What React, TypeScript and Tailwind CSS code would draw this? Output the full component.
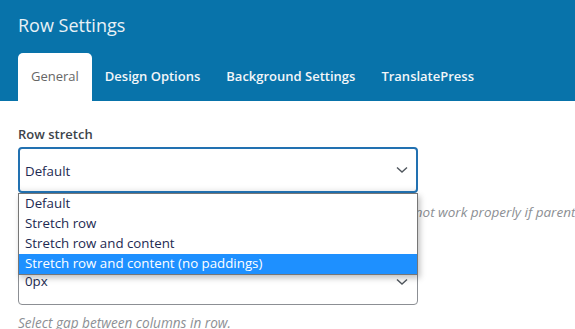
const tabs = ["General", "Design Options", "Background Settings", "TranslatePress"];

const options = [
  "Default",
  "Stretch row",
  "Stretch row and content",
  "Stretch row and content (no paddings)",
];

function Chevron() {
  return (
    <svg width="12" height="8" viewBox="0 0 12 8" className="shrink-0">
      <path d="M1 1.5 L6 6 L11 1.5" fill="none" stroke="#50575e" strokeWidth="1.4" />
    </svg>
  );
}

export default function App() {
  return (
    <div
      className="w-[575px] h-[329px] overflow-hidden bg-white"
      style={{ fontFamily: '"Open Sans", "Noto Sans", sans-serif' }}
    >
      <div className="bg-[#0873aa] px-[18px] pt-[11px]">
        <h1 className="text-[18px] leading-[28px] text-[#e8f1f6] font-normal">Row Settings</h1>
        <div className="flex mt-[14px]">
          {tabs.map((t, i) => (
            <div
              key={t}
              className={
                i === 0
                  ? "h-[48px] px-[13px] flex items-center rounded-t-[5px] bg-white text-[13px] text-[#666]"
                  : "h-[48px] px-[13px] flex items-center text-[13px] font-semibold text-[#f2f6f9]"
              }
            >
              {t}
            </div>
          ))}
        </div>
      </div>

      <div className="px-[18px] pt-[23px]">
        <div className="relative w-[400px]">
          <div className="text-[13px] leading-[20px] font-semibold text-[#3c434a]">Row stretch</div>
          <div className="mt-[3px] h-[46px] border-2 border-[#2271b1] rounded-[4px] flex items-center justify-between pl-[5px] pr-[8px] shadow-[inset_0_-6px_6px_-6px_rgba(0,0,0,0.12)]">
            <span className="text-[13.3px] leading-[20px] pt-[2px] text-[#1d2a52]">Default</span>
            <Chevron />
          </div>
          <div className="mt-[9px] text-[13.5px] leading-[20px] italic text-[#8c8f94] whitespace-nowrap">
            Select stretching options for row and content (Note: stretched may not work properly if parent container has "overflow: hidden" CSS property).
          </div>
          <div className="mt-[13px] text-[13px] leading-[20px] font-semibold text-[#3c434a]">Columns gap</div>
          <div className="mt-[4px] h-[46px] border border-[#8c8f94] rounded-[4px] flex items-center justify-between pl-[6px] pr-[9px]">
            <span className="text-[13.3px] text-[#1d2a52]">0px</span>
            <Chevron />
          </div>
          <div className="mt-[8px] text-[13.6px] leading-[20px] italic text-[#8c8f94] whitespace-nowrap">
            Select gap between columns in row.
          </div>

          <div className="absolute left-0 top-[69px] w-[400px] bg-white border border-[#767676] shadow-[2px_3px_6px_rgba(0,0,0,0.25)]">
            {options.map((o, i) => (
              <div
                key={o}
                className={
                  i === options.length - 1
                    ? "h-[20px] flex items-center pl-[6px] text-[13.3px] bg-[#1e90ff] text-white"
                    : "h-[20px] flex items-center pl-[6px] text-[13.3px] text-[#1d2a52]"
                }
              >
                {o}
              </div>
            ))}
          </div>
        </div>
      </div>
    </div>
  );
}
